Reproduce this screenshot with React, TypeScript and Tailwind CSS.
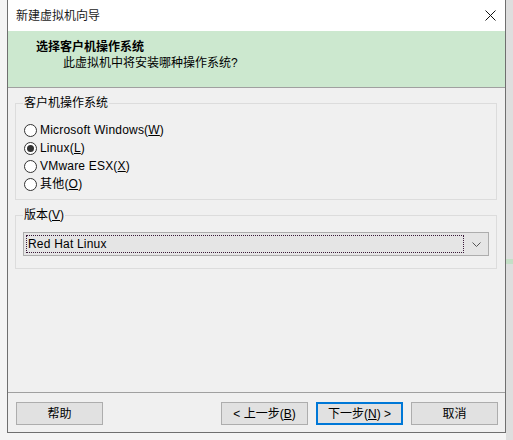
import React from "react";

function Radio({ checked }: { checked?: boolean }) {
  return (
    <span className="flex h-[13px] w-[13px] shrink-0 items-center justify-center rounded-full border border-[#333333] bg-white">
      {checked && <span className="h-[7px] w-[7px] rounded-full bg-[#333333]" />}
    </span>
  );
}

function Btn({ children, primary }: { children: React.ReactNode; primary?: boolean }) {
  return (
    <button
      className={
        primary
          ? "flex h-[23px] w-[87px] items-center justify-center border-2 border-[#0078d7] bg-[#e1e1e1] text-[12px] text-black"
          : "flex h-[23px] w-[87px] items-center justify-center border border-[#adadad] bg-[#e1e1e1] text-[12px] text-black"
      }
    >
      {children}
    </button>
  );
}

export default function App() {
  const options = [
    { label: "Microsoft Windows", key: "W" },
    { label: "Linux", key: "L", checked: true },
    { label: "VMware ESX", key: "X" },
    { label: "其他", key: "O" },
  ];

  return (
    <div className='flex h-[440px] w-[513px] overflow-hidden bg-[#f4f4f4] font-["Liberation_Sans","Noto_Sans_CJK_SC",sans-serif] text-[12px] leading-[16px] text-black'>
      <div className="w-[7px] shrink-0" />
      <div className="flex h-[433px] w-[499px] shrink-0 flex-col border-x border-b border-[#6f6f6f] bg-[#f0f0f0]">
        {/* title bar */}
        <div className="flex h-[31px] items-center justify-between bg-white pl-[8px] pr-[8px]">
          <span className="text-[12px] text-[#1a1a1a]">新建虚拟机向导</span>
          <svg width="11" height="11" viewBox="0 0 11 11" className="mr-[1px]">
            <path d="M0.5 0.5 L10.5 10.5 M10.5 0.5 L0.5 10.5" stroke="#111" strokeWidth="1" />
          </svg>
        </div>

        {/* header */}
        <div className="h-[57px] border-b border-[#a0a0a0] bg-[#cce8cf] pt-[8px]">
          <div className="pl-[28px] font-bold">选择客户机操作系统</div>
          <div className="pl-[55px]">此虚拟机中将安装哪种操作系统?</div>
        </div>

        {/* body */}
        <div className="flex flex-1 flex-col px-[7px] pr-[8px] pt-[7px]">
          <fieldset className="border border-[#dcdcdc] pb-[6px] pl-[7px]">
            <legend className="px-[1px]">客户机操作系统</legend>
            <div className="mt-[10px] flex flex-col">
              {options.map((o) => (
                <label key={o.key} className="flex h-[18px] items-center gap-[3px] pl-[1px] tracking-[0.2px]">
                  <Radio checked={o.checked} />
                  <span>
                    {o.label}(<span className="underline">{o.key}</span>)
                  </span>
                </label>
              ))}
            </div>
          </fieldset>

          <fieldset className="mt-[7px] border border-[#dcdcdc] pb-[12px] pl-[7px] pr-[7px]">
            <legend className="px-[1px]">
              版本(<span className="underline">V</span>)
            </legend>
            <div className="mt-[9px] flex h-[24px] items-center border border-[#adadad] bg-[#e5e5e5] pl-[2px] pr-[4px]">
              <div className="flex h-[18px] flex-1 items-center border border-dotted border-[#3a1a3a] pl-[1px] tracking-[0.2px]">
                Red Hat Linux
              </div>
              <svg width="9" height="5" viewBox="0 0 9 5" className="ml-[8px] mr-[3px]">
                <path d="M0.5 0.5 L4.5 4.5 L8.5 0.5" stroke="#555" strokeWidth="1" fill="none" />
              </svg>
            </div>
          </fieldset>
        </div>

        {/* footer */}
        <div className="flex items-center border-t border-[#a0a0a0] pb-[7px] pl-[8px] pr-[7px] pt-[9px]">
          <Btn>帮助</Btn>
          <div className="flex-1" />
          <div className="flex gap-[8px]">
            <Btn>
              &lt; 上一步(<span className="underline">B</span>)
            </Btn>
            <Btn primary>
              下一步(<span className="underline">N</span>) &gt;
            </Btn>
            <Btn>取消</Btn>
          </div>
        </div>
      </div>
      <div className="flex w-[7px] shrink-0 flex-col bg-[#dedede]">
        <div className="h-[259px]" />
        <div className="h-[5px] bg-[#c4dfc6]" />
      </div>
    </div>
  );
}
